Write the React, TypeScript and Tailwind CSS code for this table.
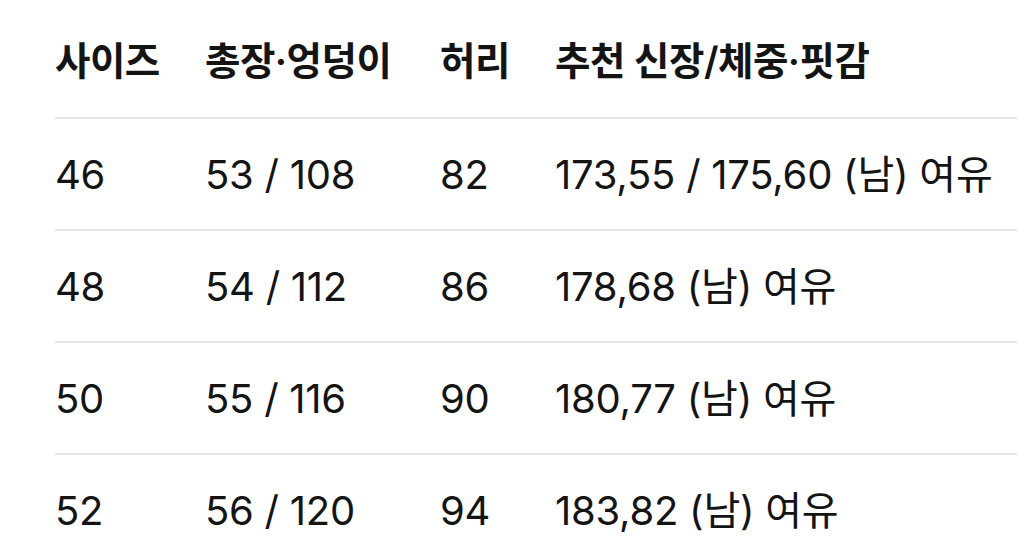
const head = ['사이즈', '총장·엉덩이', '허리', '추천 신장/체중·핏감']

const rows = [
  ['46', '53 / 108', '82', '173,55 / 175,60 (남) 여유'],
  ['48', '54 / 112', '86', '178,68 (남) 여유'],
  ['50', '55 / 116', '90', '180,77 (남) 여유'],
  ['52', '56 / 120', '94', '183,82 (남) 여유'],
]

const cols = 'grid grid-cols-[150px_235px_115px_1fr]'

export default function App() {
  return (
    <div
      className="w-[1024px] h-[555px] overflow-hidden bg-white text-[#141414] pl-[55px] pr-[7px]"
      style={{ fontFamily: 'Inter, "Noto Sans CJK KR", sans-serif' }}
    >
      {/* header */}
      <div className={`${cols} h-[117px] items-center pt-[6px] text-[38.5px] font-semibold tracking-[-0.5px]`}>
        {head.map((h) => (
          <div key={h} className="whitespace-nowrap">{h}</div>
        ))}
      </div>

      {/* rows */}
      {rows.map((r) => (
        <div
          key={r[0]}
          className={`${cols} h-[112px] items-center border-t-2 border-[#e6e6e6] pt-[1px] text-[40px] tracking-[-0.25px]`}
        >
          {r.map((c, i) => (
            <div key={i} className="whitespace-nowrap">{c}</div>
          ))}
        </div>
      ))}
    </div>
  )
}
